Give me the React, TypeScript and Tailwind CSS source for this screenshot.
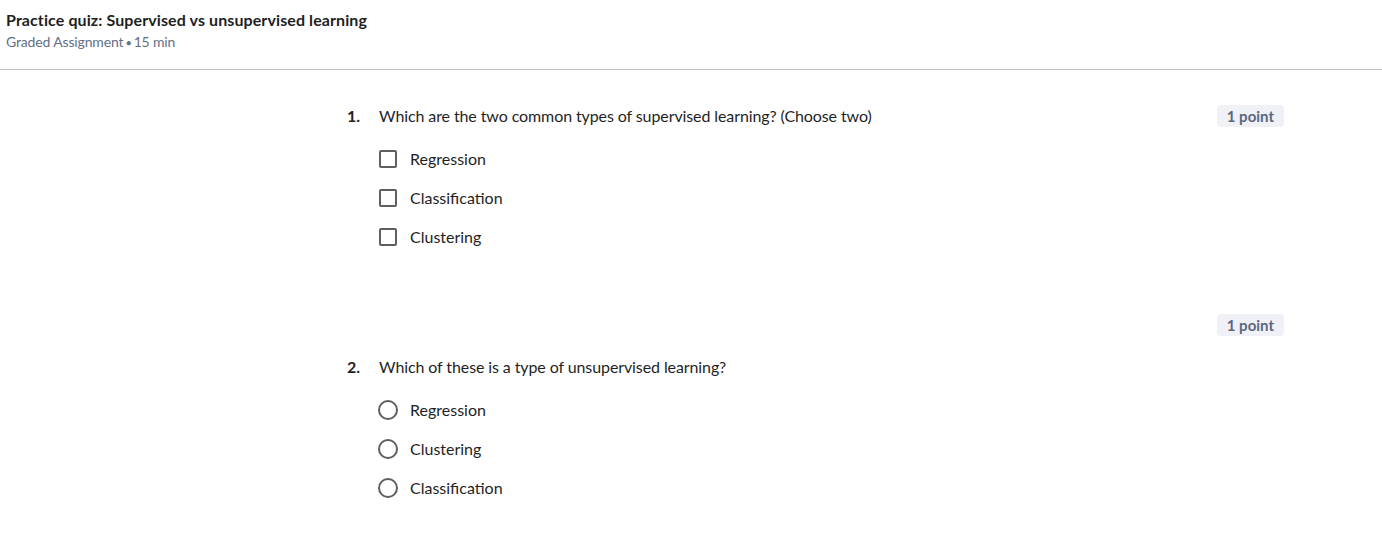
import React from "react";

const font = { fontFamily: '"Source Sans Pro", Lato, "Noto Sans", sans-serif' };

function Checkbox() {
  return <span className="block w-[18px] h-[18px] border-2 border-[#5f5f5f] rounded-[2px] shrink-0" />;
}
function Radio() {
  return <span className="block w-[20px] h-[20px] border-2 border-[#5f5f5f] rounded-full shrink-0" />;
}

function Badge() {
  return (
    <span className="inline-flex items-center h-[22px] px-[10px] rounded-[4px] bg-[#f0f1f7] text-[#5b6780] text-[15px] font-bold">
      1 point
    </span>
  );
}

function Option({ label, kind }: { label: string; kind: "check" | "radio" }) {
  return (
    <div className={`flex items-center h-[39px] ${kind === "check" ? "pl-[32px] gap-[13px]" : "pl-[31px] gap-[12px]"}`}>
      {kind === "check" ? <Checkbox /> : <Radio />}
      <span className="text-[16px] text-[#1f1f1f]">{label}</span>
    </div>
  );
}

export default function App() {
  return (
    <div className="w-[1382px] h-[541px] bg-white overflow-hidden" style={font}>
      <header className="h-[70px] border-b border-[#c4c4c4] pl-[6px] pt-[10px]">
        <div className="text-[16px] font-bold text-[#1f1f1f] leading-[20px] tracking-[0.1px]">
          Practice quiz: Supervised vs unsupervised learning
        </div>
        <div className="text-[14px] text-[#636f85] leading-[22px] mt-[1px] tracking-[-0.15px]">
          Graded Assignment<span className="mx-[2px] text-[11px]">•</span>15 min
        </div>
      </header>
      <main className="ml-[347px] w-[937px]">
        <section className="pt-[35px]">
          <div className="flex items-center justify-between h-[22px]">
            <div className="flex items-center">
              <span className="w-[32px] text-[16px] font-bold text-[#1f1f1f]">1.</span>
              <span className="text-[16px] text-[#1f1f1f] tracking-[-0.1px]">
                Which are the two common types of supervised learning? (Choose two)
              </span>
            </div>
            <Badge />
          </div>
          <div className="mt-[12px]">
            <Option kind="check" label="Regression" />
            <Option kind="check" label="Classification" />
            <Option kind="check" label="Clustering" />
          </div>
        </section>
        <section className="pt-[58px]">
          <div className="flex justify-end h-[22px]">
            <Badge />
          </div>
          <div className="flex items-center h-[22px] mt-[20px]">
            <span className="w-[32px] text-[16px] font-bold text-[#1f1f1f]">2.</span>
            <span className="text-[16px] text-[#1f1f1f] tracking-[-0.1px]">Which of these is a type of unsupervised learning?</span>
          </div>
          <div className="mt-[12px]">
            <Option kind="radio" label="Regression" />
            <Option kind="radio" label="Clustering" />
            <Option kind="radio" label="Classification" />
          </div>
        </section>
      </main>
    </div>
  );
}
